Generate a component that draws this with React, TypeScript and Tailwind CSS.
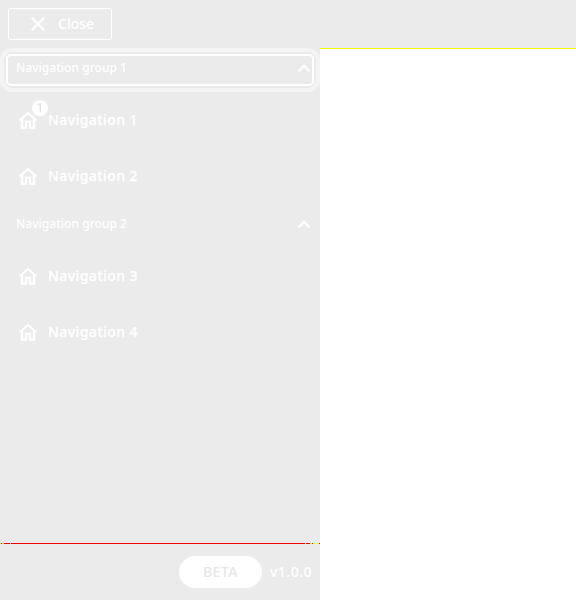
import React from "react";

function HomeIcon() {
  return (
    <svg width="24" height="24" viewBox="0 0 24 24" fill="white" stroke="white" strokeWidth="0.3" className="block">
      <path d="M12 6.2l5 4.5V18.7h-2v-6H9v6H7v-8l5-4.5M12 3.7L2.6 12.3H5V20.7h6v-6h2v6h6v-8.4h2.4L12 3.7z" />
    </svg>
  );
}

function Group({ label, focused }: { label: string; focused?: boolean }) {
  return (
    <button className="relative flex h-11 w-full items-start justify-between pt-3 pl-4 pr-1 text-left text-[12px] font-medium leading-4 tracking-[0.03px]">
      {focused && (
        <>
          <span className="absolute inset-0 rounded-xl border-4 border-[#f4f4f4]" />
          <span className="absolute inset-[6px] rounded-[5px] border-2 border-white" />
        </>
      )}
      <span>{label}</span>
      <svg width="24" height="24" viewBox="0 0 24 24" fill="white" stroke="white" strokeWidth="0.5" className="-mt-1">
        <path d="M12 8.4l-6 6 1.41 1.41L12 11.23l4.59 4.58L18 14.4z" />
      </svg>
    </button>
  );
}

function Item({ label, badge }: { label: string; badge?: string }) {
  return (
    <a className="flex h-14 items-center gap-2 pl-4 text-[14px] font-medium leading-6 tracking-[0.42px]">
      <span className="relative">
        <HomeIcon />
        {badge && (
          <span className="absolute -top-2 left-4 flex size-4 items-center justify-center rounded-full bg-white text-[12px] font-normal leading-4 tracking-normal text-[#dedede]">
            {badge}
          </span>
        )}
      </span>
      <span className="[-webkit-text-stroke:0.25px_white]">{label}</span>
    </a>
  );
}

export default function App() {
  return (
    <div className="flex h-[600px] w-[576px] flex-col overflow-hidden bg-white font-['Noto_Sans',sans-serif] text-white">
      <header className="h-12 shrink-0 bg-[#ebebeb] p-2">
        <button className="flex h-8 w-[104px] items-center rounded-[2px] border border-white pl-[17px] text-[14px] font-medium leading-4">
          <svg width="24" height="24" viewBox="0 0 24 24" fill="white" stroke="white" strokeWidth="0.25">
            <path d="M19 6.41L17.59 5 12 10.59 6.41 5 5 6.41 10.59 12 5 17.59 6.41 19 12 13.41 17.59 19 19 17.59 13.41 12z" />
          </svg>
          <span className="ml-2 leading-4">Close</span>
        </button>
      </header>
      <div className="flex min-h-0 flex-1">
        <nav className="flex w-80 flex-col bg-[#ebebeb]">
          <Group label="Navigation group 1" focused />
          <Item label="Navigation 1" badge="1" />
          <Item label="Navigation 2" />
          <Group label="Navigation group 2" />
          <Item label="Navigation 3" />
          <Item label="Navigation 4" />
          <footer className="mt-auto">
            <div className="flex h-px bg-[#f00000]">
              <span className="w-px bg-[#ffff40]" />
              <span className="ml-px w-0.5 bg-[#ffff40]" />
              <span className="ml-1.5 w-px bg-[#ffff40]" />
              <span className="ml-auto w-px bg-[#ffff40]" />
              <span className="ml-1 w-0.5 bg-[#ffff40]" />
              <span className="mr-px ml-px w-1.5 bg-[#ffff40]" />
            </div>
            <div className="flex h-14 items-center justify-end gap-2 pr-2 text-[14px] font-medium leading-4 tracking-[0.5px]">
              <span className="flex h-8 w-[83px] items-center justify-center rounded-full bg-white text-[#e6e6e6]">BETA</span>
              <span>v1.0.0</span>
            </div>
          </footer>
        </nav>
        <main className="flex-1 border-t border-[#ffff00]" />
      </div>
    </div>
  );
}
